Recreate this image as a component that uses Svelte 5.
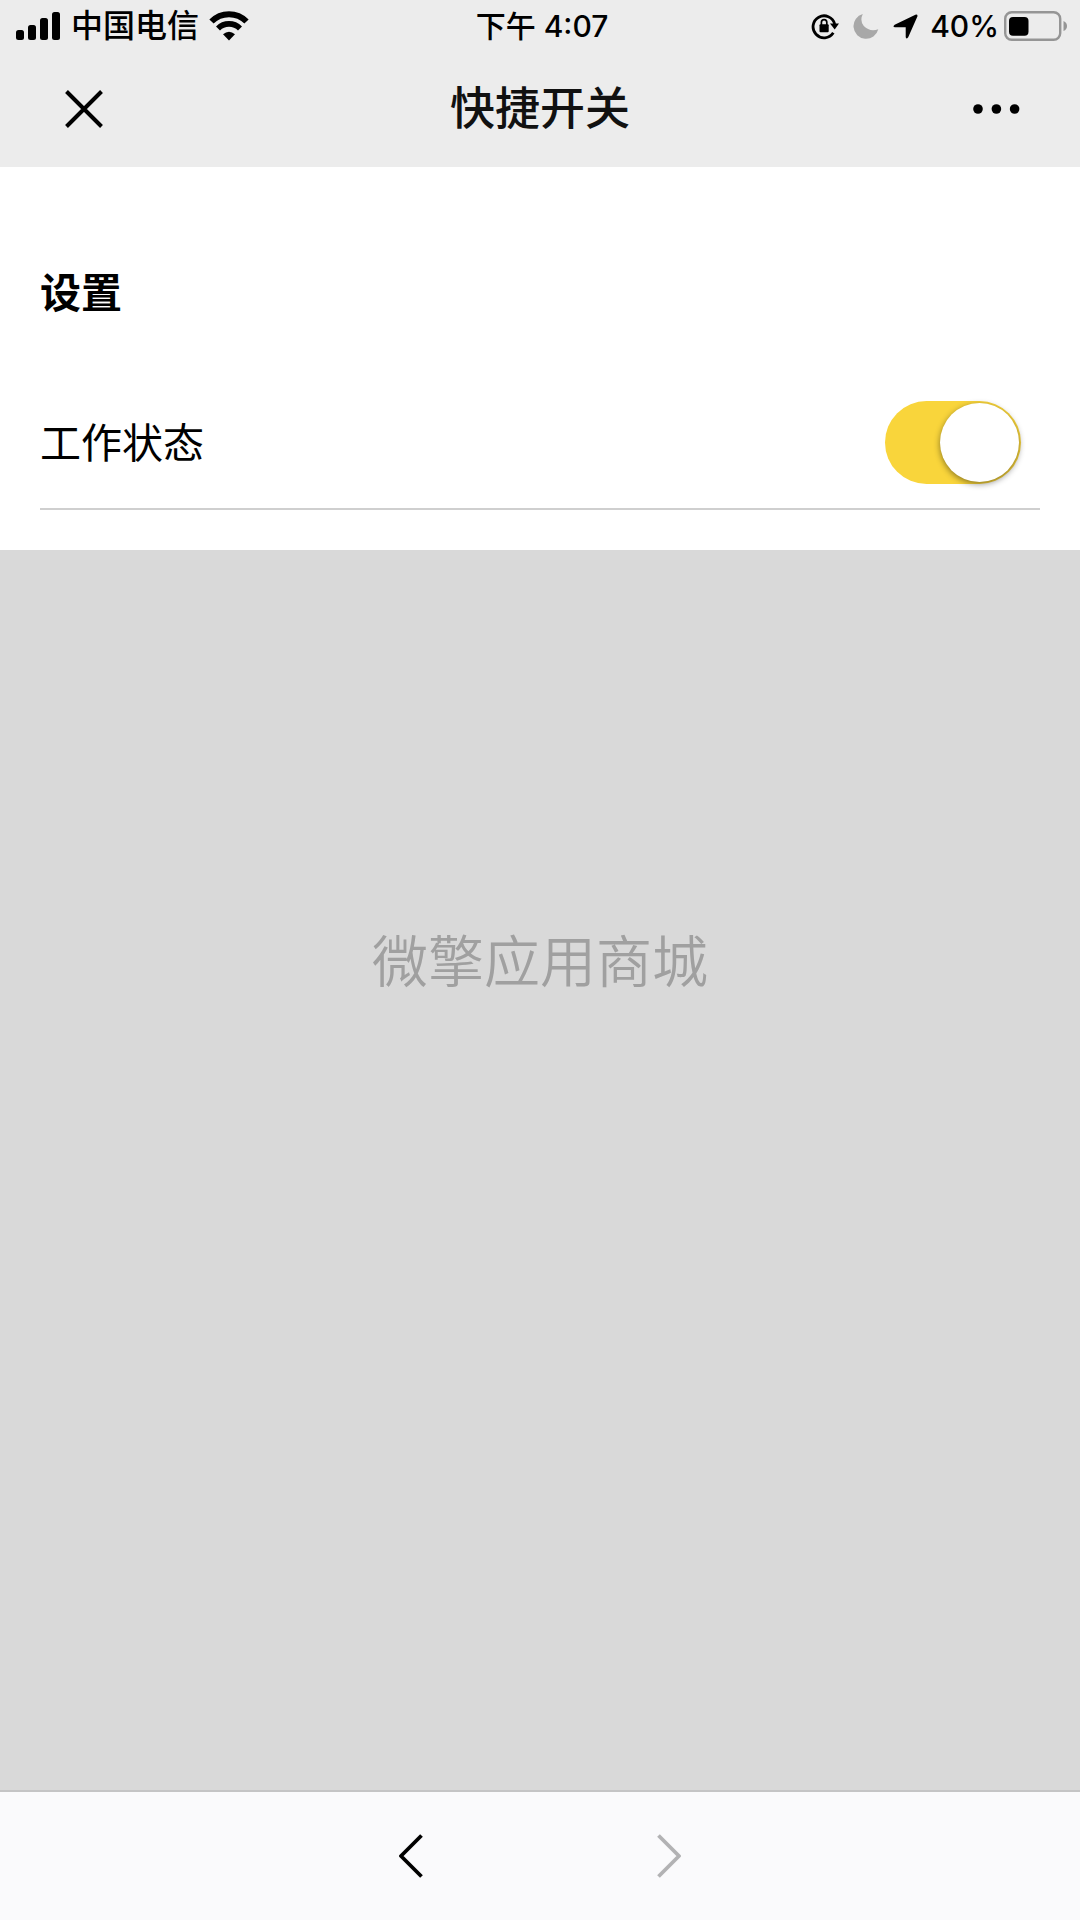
<script>
	let working = true;
</script>

<div class="screen">
	<header class="top">
		<div class="status">
			<div class="status__side">
				<svg width="44" height="28" viewBox="0 0 44 28" role="img" aria-label="信号">
					<rect x="0" y="18" width="8" height="10" rx="2.5" />
					<rect x="12" y="13" width="8" height="15" rx="2.5" />
					<rect x="24" y="6" width="8" height="22" rx="2.5" />
					<rect x="36" y="0" width="8" height="28" rx="2.5" />
				</svg>
				<span class="carrier">中国电信</span>
				<svg width="40" height="30" viewBox="0 0 40 30" role="img" aria-label="Wi-Fi">
					<path d="M2.5 10.5A24.5 24.5 0 0 1 37.5 10.5" fill="none" stroke="#000" stroke-width="6" />
					<path d="M9 17.5A15.5 15.5 0 0 1 31 17.5" fill="none" stroke="#000" stroke-width="5.6" />
					<path d="M14 23.3Q20 18.3 26 23.3L20 29.5Z" />
				</svg>
			</div>
			<span class="time">下午 4:07</span>
			<div class="status__side status__side--end">
				<svg width="28" height="28" viewBox="0 0 28 28" role="img" aria-label="方向锁定">
					<path d="M22.3 20.8A11 11 0 1 1 23.7 12" fill="none" stroke="#000" stroke-width="2.8" />
					<path d="M19 11.5H28L23.7 17.5Z" />
					<rect x="8.5" y="12.3" width="9.2" height="8" rx="1" />
					<path d="M10.4 13V10.3a2.7 2.7 0 0 1 5.4 0V13" fill="none" stroke="#000" stroke-width="1.7" />
				</svg>
				<svg class="moon" width="26" height="26" viewBox="0 0 26 26" role="img" aria-label="勿扰模式">
					<path d="M9.8 1Q6.5 7.500 10.800 13Q16.500 19 25.300 16.300A12.600 12.600 0 1 1 9.800 1Z" fill="#a8a8a8" />
				</svg>
				<svg class="arrow" width="25" height="25" viewBox="0 0 24 24" role="img" aria-label="定位">
					<path
						d="M1.600 10.200L21.500 .6Q24 .1 23.400 2.500L14.600 22.400Q13.200 24.600 12.200 22.300V12.800H2Q-.9 12.200 1.600 10.200Z"
					/>
				</svg>
				<span class="percent">40%</span>
				<svg class="battery" width="64" height="30" viewBox="0 0 64 30" role="img" aria-label="电量">
					<rect x="1.2" y="1.2" width="55" height="27.6" rx="6.5" fill="none" stroke="#959595" stroke-width="2.4" />
					<rect x="5" y="6" width="19.5" height="18.7" rx="4" />
					<path d="M59.500 10Q63 11.500 63 15T59.500 20Z" fill="#959595" />
				</svg>
			</div>
		</div>
		<nav class="nav">
			<button class="nav__btn" type="button" aria-label="关闭">
				<svg width="40" height="40" viewBox="0 0 40 40">
					<path d="M2.500 2.500L37.500 37.500M37.500 2.500L2.500 37.500" fill="none" stroke="#000" stroke-width="4" />
				</svg>
			</button>
			<h1 class="nav__title">快捷开关</h1>
			<button class="nav__btn" type="button" aria-label="更多">
				<svg width="48" height="12" viewBox="0 0 48 12">
					<circle cx="6" cy="6" r="4.8" />
					<circle cx="24.4" cy="6" r="4.8" />
					<circle cx="42.6" cy="6" r="4.8" />
				</svg>
			</button>
		</nav>
	</header>

	<section class="settings">
		<h2 class="settings__title">设置</h2>
		<div class="row">
			<label for="work-status">工作状态</label>
			<input id="work-status" class="switch" type="checkbox" role="switch" bind:checked={working} />
		</div>
	</section>

	<main class="empty">
		<p class="watermark">微擎应用商城</p>
	</main>

	<footer class="toolbar">
		<button type="button" aria-label="后退">
			<svg width="24" height="44" viewBox="0 0 24 44">
				<path d="M22.5 1.5L2 22L22.5 42.5" fill="none" stroke="#000" stroke-width="3.8" stroke-linejoin="round" />
			</svg>
		</button>
		<button type="button" aria-label="前进" disabled>
			<svg width="24" height="44" viewBox="0 0 24 44">
				<path d="M1.5 1.5L22 22L1.5 42.5" fill="none" stroke="#b2b2b4" stroke-width="3.8" stroke-linejoin="round" />
			</svg>
		</button>
	</footer>
</div>

<style>
	:global(body) {
		margin: 0;
	}

	.screen {
		display: flex;
		flex-direction: column;
		min-height: 100vh;
		background: #fff;
		color: #000;
		font-family: Inter, 'Noto Sans CJK SC', sans-serif;
	}

	svg {
		display: block;
		flex: none;
	}

	button {
		display: flex;
		align-items: center;
		justify-content: center;
		padding: 0;
		border: 0;
		background: none;
	}

	h1,
	h2,
	p {
		margin: 0;
	}

	.top {
		background: #ececec;
	}

	.status {
		display: grid;
		grid-template-columns: 1fr auto 1fr;
		align-items: center;
		height: 51px;
		padding: 0 12px 0 16px;
		font-size: 30px;
		line-height: 52px;
	}

	.status__side {
		display: flex;
		align-items: center;
		white-space: nowrap;
	}

	.status__side--end {
		justify-content: flex-end;
	}

	.carrier {
		margin: 0 10px 0 11px;
		font-size: 32px;
		font-weight: 500;
	}

	.time,
	.percent {
		font-weight: 500;
	}

	.moon {
		margin-left: 14px;
	}

	.arrow {
		margin-left: 14px;
	}

	.percent {
		margin-left: 12px;
	}

	.battery {
		margin-left: 5px;
	}

	.nav {
		display: flex;
		align-items: center;
		justify-content: space-between;
		height: 116px;
		padding: 0 54px;
	}

	.nav__btn {
		width: 60px;
		height: 60px;
	}

	.nav__title {
		color: #111;
		font-size: 45px;
		font-weight: 500;
		line-height: 60px;
	}

	.settings {
		padding: 96px 40px 40px;
	}

	.settings__title {
		font-size: 41px;
		font-weight: 700;
		line-height: 60px;
	}

	.row {
		display: flex;
		align-items: center;
		justify-content: space-between;
		margin-top: 78px;
		padding: 0 19px 24px 0;
		border-bottom: 2px solid #cfcfcf;
		font-size: 41px;
		line-height: 60px;
	}

	.switch {
		display: flex;
		align-items: center;
		box-sizing: border-box;
		width: 136px;
		height: 83px;
		margin: 0;
		padding: 2px;
		border-radius: 42px;
		background: #ddd;
		appearance: none;
	}

	.switch::before {
		content: '';
		width: 79px;
		height: 79px;
		border-radius: 50%;
		background: #fff;
		box-shadow: 0 2px 6px rgba(0, 0, 0, 0.45);
	}

	.switch:checked {
		justify-content: flex-end;
		background: #f9d53b;
	}

	.empty {
		display: flex;
		flex: 1;
		justify-content: center;
		padding-top: 372px;
		background: #d9d9d9;
	}

	.watermark {
		color: #a0a0a0;
		font-size: 56px;
		font-weight: 350;
		line-height: 80px;
	}

	.toolbar {
		display: flex;
		align-items: center;
		justify-content: center;
		gap: 214px;
		height: 128px;
		border-top: 2px solid #c4c4c5;
		background: #fafafc;
	}

	.toolbar button {
		width: 44px;
		height: 80px;
	}
</style>
